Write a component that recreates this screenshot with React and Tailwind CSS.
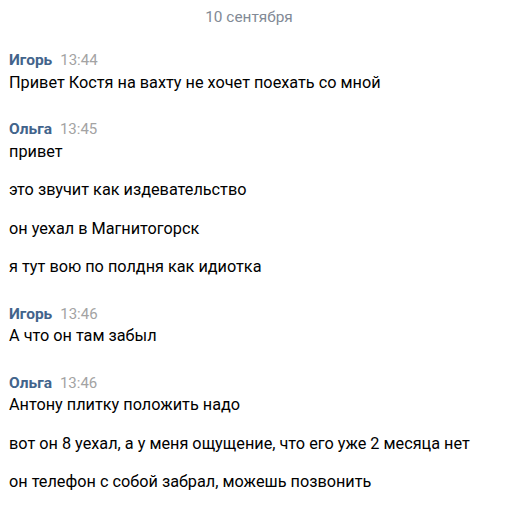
import React from 'react';

const groups = [
  { name: 'Игорь', time: '13:44', messages: ['Привет Костя на вахту не хочет поехать со мной'] },
  {
    name: 'Ольга',
    time: '13:45',
    messages: ['привет', 'это звучит как издевательство', 'он уехал в Магнитогорск', 'я тут вою по полдня как идиотка'],
  },
  { name: 'Игорь', time: '13:46', messages: ['А что он там забыл'] },
  {
    name: 'Ольга',
    time: '13:46',
    messages: [
      'Антону плитку положить надо',
      'вот он 8 уехал, а у меня ощущение, что его уже 2 месяца нет',
      'он телефон с собой забрал, можешь позвонить',
    ],
  },
];

export default function App() {
  return (
    <div className="h-[518px] w-[512px] overflow-hidden bg-white font-['Roboto',sans-serif]">
      {/* date divider */}
      <div className="w-[498px] pt-[7px] text-center text-[15.4px] leading-[20px] text-[#828a96]">10 сентября</div>

      <div className="flex flex-col gap-[27.5px] pt-[24px] pl-[9px]">
        {groups.map((g, i) => (
          <div key={i} className="flex flex-col">
            <div className="mb-[3.5px] flex items-baseline gap-[8px] leading-[18px]">
              <span className="text-[15.5px] font-bold text-[#42648b]">{g.name}</span>
              <span className="text-[15px] text-[#a3a3a3]">{g.time}</span>
            </div>
            <div className="flex flex-col gap-[18.5px]">
              {g.messages.map((m, j) => (
                <div key={j} className="text-[16.25px] leading-[20px] text-black">
                  {m}
                </div>
              ))}
            </div>
          </div>
        ))}
      </div>
    </div>
  );
}
